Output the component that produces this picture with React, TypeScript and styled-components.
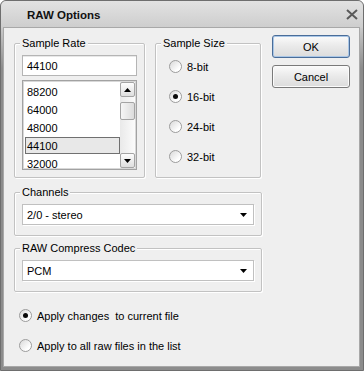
import React from 'react';
import styled, { createGlobalStyle } from 'styled-components';

const Global = createGlobalStyle`
  html, body { margin: 0; padding: 0; background: #ffffff; }
  body { font-family: "Liberation Sans", Arial, sans-serif; font-size: 11px; color: #000; }
  * { box-sizing: border-box; }
`;

const Window = styled.div`
  width: 364px;
  height: 371px;
  display: flex;
  flex-direction: column;
  border: 1px solid #6e6e6e;
  border-radius: 6px 6px 0 0;
  overflow: hidden;
  background: #8c8c8c;
`;

const TitleBar = styled.div`
  height: 27px;
  flex: none;
  display: flex;
  align-items: center;
  justify-content: space-between;
  padding: 0 5px 0 26px;
  background: linear-gradient(#e2e2e2, #cdcdcd);
`;

const Title = styled.span`
  font-weight: bold;
  font-size: 11.5px;
  color: #111;
`;

const Frame = styled.div`
  flex: 1;
  display: flex;
  padding: 0 4px 4px 3px;
  background: linear-gradient(#c9c9c9, #8c8c8c 40px);
`;

const Client = styled.div`
  flex: 1;
  background: #efefef;
  padding: 7px 9px 0 10px;
  display: flex;
  flex-direction: column;
  box-shadow: 0 0 0 1px #a8a8a8;
`;

const TopRow = styled.div`
  display: flex;
  align-items: flex-start;
`;

const Group = styled.div<{ $w: number; $h: number; $mt?: number; $ml?: number }>`
  position: relative;
  width: ${(p) => p.$w}px;
  height: ${(p) => p.$h}px;
  margin-top: ${(p) => p.$mt ?? 0}px;
  margin-left: ${(p) => p.$ml ?? 0}px;
  border: 1px solid #c2c2c2;
  border-radius: 2px;
  box-shadow: inset 1px 1px 0 #ffffff, 1px 1px 0 #ffffff;
  padding: 11px 7px 0 7px;
  display: flex;
  flex-direction: column;
`;

const Caption = styled.span`
  position: absolute;
  top: -7px;
  left: 5px;
  padding: 0 2px;
  line-height: 13px;
  background: #efefef;
  color: #000;
`;

const TextBox = styled.div`
  height: 21px;
  border: 1px solid #b5b5b5;
  background: #fff;
  padding-left: 4px;
  display: flex;
  align-items: center;
  box-shadow: inset 0 1px 0 #e8e8e8;
`;

const ListBox = styled.div`
  margin-top: 4px;
  height: 90px;
  border: 1px solid #a2a2a2;
  padding: 1px;
  background: #fff;
  display: flex;
  box-shadow: inset 0 0 0 1px #d8d8d8;
`;

const Items = styled.div`
  flex: 1;
  overflow: hidden;
  padding-top: 1px;
  background: #fff;
`;

const Item = styled.div<{ $selected?: boolean }>`
  height: 17px;
  margin: 0 0 1px 1px;
  padding-left: 1px;
  display: flex;
  align-items: center;
  border: 1px solid ${(p) => (p.$selected ? '#707070' : 'transparent')};
  background: ${(p) => (p.$selected ? '#e8e8e8' : 'transparent')};
`;

const ScrollBar = styled.div`
  width: 15px;
  display: flex;
  flex-direction: column;
  background: linear-gradient(90deg, #e9e9e9, #fbfbfb);
`;

const ScrollButton = styled.div`
  height: 15px;
  flex: none;
  border: 1px solid #a4a4a4;
  border-radius: 2px;
  background: linear-gradient(#fdfdfd, #dedede);
  display: flex;
  align-items: center;
  justify-content: center;
`;

const Track = styled.div`
  flex: 1;
  padding-top: 5px;
`;

const Thumb = styled.div`
  height: 18px;
  border: 1px solid #a4a4a4;
  border-radius: 2px;
  background: linear-gradient(90deg, #f6f6f6, #dcdcdc);
`;

const RadioColumn = styled.div`
  display: flex;
  flex-direction: column;
  gap: 17px;
  padding: 5px 0 0 6px;
`;

const RadioRow = styled.div<{ $ml?: number; $mt?: number }>`
  display: flex;
  align-items: center;
  gap: 5px;
  height: 13px;
  margin-left: ${(p) => p.$ml ?? 0}px;
  margin-top: ${(p) => p.$mt ?? 0}px;
`;

const RadioCircle = styled.span<{ $checked?: boolean }>`
  width: 13px;
  height: 13px;
  flex: none;
  border-radius: 50%;
  border: 1px solid #9c9c9c;
  background: linear-gradient(135deg, #d9d9d9, #ffffff 75%);
  display: flex;
  align-items: center;
  justify-content: center;
  &::after {
    content: '';
    width: 5px;
    height: 5px;
    border-radius: 50%;
    background: ${(p) => (p.$checked ? '#0a0a0a' : 'transparent')};
  }
`;

const ButtonColumn = styled.div`
  margin-left: 11px;
  width: 78px;
  display: flex;
  flex-direction: column;
  gap: 7px;
`;

const Button = styled.div<{ $default?: boolean }>`
  height: 23px;
  border: 1px solid ${(p) => (p.$default ? '#4a6d99' : '#7a7a7a')};
  border-radius: 3px;
  background: linear-gradient(#fbfbfb, #e9e9e9 50%, #dcdcdc);
  box-shadow: ${(p) => (p.$default ? 'inset 0 0 0 1px #a9c6e6' : 'inset 0 0 0 1px #fbfbfb')};
  display: flex;
  align-items: center;
  justify-content: center;
  color: #000;
`;

const Select = styled.div`
  height: 21px;
  border: 1px solid #c0c0c0;
  background: #fff;
  padding: 0 6px 0 4px;
  display: flex;
  align-items: center;
  justify-content: space-between;
  box-shadow: 1px 1px 0 #ffffff;
`;

const Arrow = ({ up }: { up?: boolean }) => (
  <svg width="7" height="4" viewBox="0 0 7 4">
    <polygon points={up ? '0,4 7,4 3.5,0' : '0,0 7,0 3.5,4'} fill="#000" />
  </svg>
);

const CloseIcon = () => (
  <svg width="12" height="11" viewBox="0 0 12 11">
    <path d="M1 1 L11 10 M11 1 L1 10" stroke="#5a5a5a" strokeWidth="2" />
  </svg>
);

const rates = ['88200', '64000', '48000', '44100', '32000'];
const sizes = ['8-bit', '16-bit', '24-bit', '32-bit'];

export default function App() {
  return (
    <>
      <Global />
      <Window>
        <TitleBar>
          <Title>RAW Options</Title>
          <CloseIcon />
        </TitleBar>
        <Frame>
          <Client>
            <TopRow>
              <Group $w={131} $h={135} $mt={8}>
                <Caption>Sample Rate</Caption>
                <TextBox>44100</TextBox>
                <ListBox>
                  <Items>
                    {rates.map((r) => (
                      <Item key={r} $selected={r === '44100'}>
                        {r}
                      </Item>
                    ))}
                  </Items>
                  <ScrollBar>
                    <ScrollButton>
                      <Arrow up />
                    </ScrollButton>
                    <Track>
                      <Thumb />
                    </Track>
                    <ScrollButton>
                      <Arrow />
                    </ScrollButton>
                  </ScrollBar>
                </ListBox>
              </Group>
              <Group $w={106} $h={135} $mt={8} $ml={10}>
                <Caption>Sample Size</Caption>
                <RadioColumn>
                  {sizes.map((s) => (
                    <RadioRow key={s}>
                      <RadioCircle $checked={s === '16-bit'} />
                      {s}
                    </RadioRow>
                  ))}
                </RadioColumn>
              </Group>
              <ButtonColumn>
                <Button $default>OK</Button>
                <Button>Cancel</Button>
              </ButtonColumn>
            </TopRow>
            <Group $w={248} $h={44} $mt={14}>
              <Caption>Channels</Caption>
              <Select>
                2/0 - stereo
                <Arrow />
              </Select>
            </Group>
            <Group $w={248} $h={44} $mt={12}>
              <Caption>RAW Compress Codec</Caption>
              <Select>
                PCM
                <Arrow />
              </Select>
            </Group>
            <RadioRow $ml={5} $mt={17}>
              <RadioCircle $checked />
              Apply changes&nbsp; to current file
            </RadioRow>
            <RadioRow $ml={5} $mt={17}>
              <RadioCircle />
              Apply to all raw files in the list
            </RadioRow>
          </Client>
        </Frame>
      </Window>
    </>
  );
}
